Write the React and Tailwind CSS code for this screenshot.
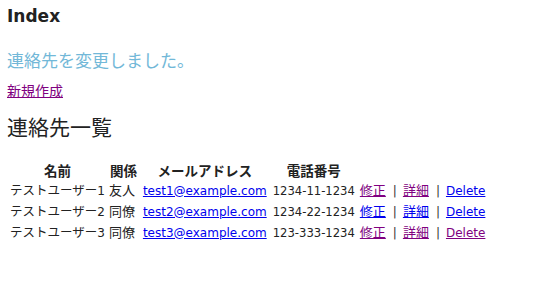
export default function App() {
  const rows = [
    { name: "テストユーザー", n: "1", rel: "友人", email: "test1@example.com", tel: "1234-11-1234", v: [true, true, false] },
    { name: "テストユーザー", n: "2", rel: "同僚", email: "test2@example.com", tel: "1234-22-1234", v: [false, false, false] },
    { name: "テストユーザー", n: "3", rel: "同僚", email: "test3@example.com", tel: "123-333-1234", v: [true, true, true] },
  ];
  const lc = (v) => (v ? "text-[#800080] underline" : "text-[#0000ee] underline");
  return (
    <div className="min-h-[296px] w-[547px] bg-white px-[7px] pt-[4px] text-[#222] font-['DejaVu_Sans','Noto_Sans_CJK_JP',sans-serif]">
      <div className="text-[17px] font-bold leading-[24px]">Index</div>
      <div className="mt-[21px] text-[17px] leading-[24px] text-[#72b8d8]">連絡先を変更しました。</div>
      <div className="mt-[9px] text-[14px] leading-[18px]">
        <a href="#" className="text-[#800080] underline">新規作成</a>
      </div>
      <div className="mt-[15px] text-[21px] leading-[26px]">連絡先一覧</div>
      <table className="mt-[18px] border-separate border-spacing-[2px] text-[13px] leading-[16px]">
        <thead>
          <tr>
            <th className="px-[2px] pt-[2px] pb-0 text-[13.5px] font-bold">名前</th>
            <th className="px-[2px] pt-[2px] pb-0 text-[13.5px] font-bold">関係</th>
            <th className="px-[2px] pt-[2px] pb-0 text-[13.5px] font-bold">メールアドレス</th>
            <th className="px-[2px] pt-[2px] pb-0 text-[13.5px] font-bold">電話番号</th>
            <th className="px-[2px] pt-[2px] pb-0"></th>
          </tr>
        </thead>
        <tbody>
          {rows.map((r, i) => (
            <tr key={i}>
              <td className="h-[19px] px-[1px] py-0 whitespace-nowrap"><span className="text-[12.5px]">{r.name}</span><span className="text-[12px]">{r.n}</span></td>
              <td className="h-[19px] px-[1px] py-0 whitespace-nowrap">{r.rel}</td>
              <td className="h-[19px] px-[2px] py-0 whitespace-nowrap text-[12px]"><a href="#" className="text-[#0000ee] underline">{r.email}</a></td>
              <td className="h-[19px] px-[2px] py-0 whitespace-nowrap text-[11.6px]">{r.tel}</td>
              <td className="h-[19px] px-[1px] py-0 whitespace-nowrap">
                <a href="#" className={lc(r.v[0])}>修正</a>
                <span className="ml-[7px] mr-[6px] text-[12px] text-[#333]">|</span>
                <a href="#" className={lc(r.v[1])}>詳細</a>
                <span className="ml-[7px] mr-[6px] text-[12px] text-[#333]">|</span>
                <a href="#" className={`${lc(r.v[2])} text-[12px]`}>Delete</a>
              </td>
            </tr>
          ))}
        </tbody>
      </table>
    </div>
  );
}
